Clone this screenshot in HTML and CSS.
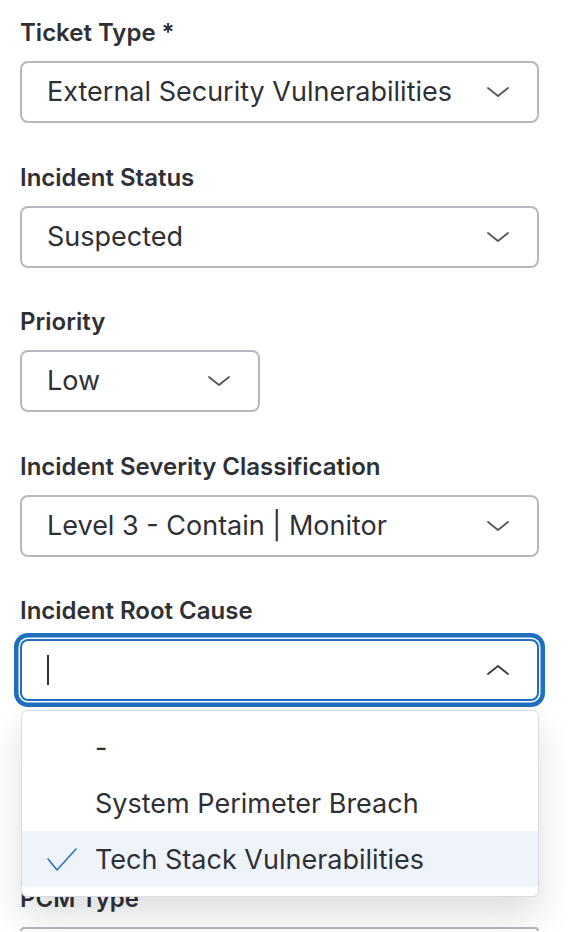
FILE: index.html
```html
<!DOCTYPE html>
<html lang="en">
<head>
<meta charset="utf-8">
<title>Ticket form</title>
<link rel="stylesheet" href="styles.css">
</head>
<body>
<form class="form">
  <div class="field">
    <label class="label">Ticket Type *</label>
    <div class="select">
      <span class="value">External Security Vulnerabilities</span>
      <svg class="chev" viewBox="0 0 22 10" width="22" height="10"><path d="M1 1 L11 9 L21 1" fill="none" stroke="#55555c" stroke-width="1.8" stroke-linecap="round" stroke-linejoin="round"/></svg>
    </div>
  </div>
  <div class="field">
    <label class="label">Incident Status</label>
    <div class="select">
      <span class="value">Suspected</span>
      <svg class="chev" viewBox="0 0 22 10" width="22" height="10"><path d="M1 1 L11 9 L21 1" fill="none" stroke="#55555c" stroke-width="1.8" stroke-linecap="round" stroke-linejoin="round"/></svg>
    </div>
  </div>
  <div class="field">
    <label class="label">Priority</label>
    <div class="select select-small">
      <span class="value">Low</span>
      <svg class="chev" viewBox="0 0 22 10" width="22" height="10"><path d="M1 1 L11 9 L21 1" fill="none" stroke="#55555c" stroke-width="1.8" stroke-linecap="round" stroke-linejoin="round"/></svg>
    </div>
  </div>
  <div class="field">
    <label class="label">Incident Severity Classification</label>
    <div class="select">
      <span class="value">Level 3 - Contain | Monitor</span>
      <svg class="chev" viewBox="0 0 22 10" width="22" height="10"><path d="M1 1 L11 9 L21 1" fill="none" stroke="#55555c" stroke-width="1.8" stroke-linecap="round" stroke-linejoin="round"/></svg>
    </div>
  </div>
  <div class="field field-open">
    <label class="label">Incident Root Cause</label>
    <div class="select select-focus">
      <span class="caret"></span>
      <svg class="chev" viewBox="0 0 22 10" width="22" height="10"><path d="M1 9 L11 1 L21 9" fill="none" stroke="#3a3a40" stroke-width="1.8" stroke-linecap="round" stroke-linejoin="round"/></svg>
    </div>
    <ul class="menu">
      <li class="option">-</li>
      <li class="option">System Perimeter Breach</li>
      <li class="option option-selected">
        <svg class="check" viewBox="0 0 30 23" width="30" height="23"><path d="M1 11 L10 22 L29 1" fill="none" stroke="#2d73c4" stroke-width="1.6" stroke-linecap="round" stroke-linejoin="round"/></svg>
        Tech Stack Vulnerabilities
      </li>
    </ul>
  </div>
  <div class="field field-last">
    <label class="label">PCM Type</label>
    <div class="select select-cut"></div>
  </div>
</form>
</body>
</html>
```

FILE: styles.css
```css
html, body {
  margin: 0;
  padding: 0;
  background: #ffffff;
}

body {
  font-family: Inter, "Noto Sans", "Liberation Sans", sans-serif;
  color: #2f3035;
  overflow: hidden;
  height: 932px;
}

.form {
  padding: 19px 29px 0 20px;
  display: flex;
  flex-direction: column;
  height: 913px;
  overflow: hidden;
}

.field {
  display: flex;
  flex-direction: column;
  margin-bottom: 40.5px;
  position: relative;
  flex: none;
}

.label {
  font-size: 24px;
  line-height: 28px;
  font-weight: 600;
  color: #2f3035;
  margin-bottom: 14px;
}

.select {
  box-sizing: border-box;
  height: 62px;
  width: 519px;
  border: 2px solid #b7b8bf;
  border-radius: 8px;
  display: flex;
  align-items: center;
  justify-content: space-between;
  padding: 0 28px 0 25px;
  background: #fff;
}

.select-small {
  width: 240px;
  padding-right: 28px;
}

.select-cut {
  height: 4px;
  border-bottom: 0;
  border-radius: 8px 8px 0 0;
}

.field-last {
  margin-bottom: 0;
}

.value {
  font-size: 27px;
  line-height: 32px;
  color: #2f3035;
  white-space: nowrap;
}

.chev {
  display: block;
  flex: none;
}

.select-focus {
  border-color: #1f6fbf;
  box-shadow: 0 0 0 1.5px #ffffff, 0 0 0 6px #1f6fbf;
}

.caret {
  display: block;
  width: 2px;
  height: 30px;
  background: #2f3035;
}

.field-open {
  margin-bottom: 184px;
}

.menu {
  position: absolute;
  top: 113px;
  left: 1px;
  width: 518px;
  box-sizing: border-box;
  margin: 0;
  padding: 8px 0 9px;
  list-style: none;
  background: #ffffff;
  border: 1px solid #d9dbe0;
  border-radius: 6px;
  box-shadow: 0 18px 36px rgba(30, 35, 45, 0.15);
  z-index: 2;
}

.option {
  position: relative;
  height: 56px;
  display: flex;
  align-items: center;
  padding-left: 73px;
  font-size: 27px;
  color: #2f3035;
  white-space: nowrap;
}

.option-selected {
  background: #eff4fb;
}

.check {
  position: absolute;
  left: 25px;
  top: 17px;
}
```
